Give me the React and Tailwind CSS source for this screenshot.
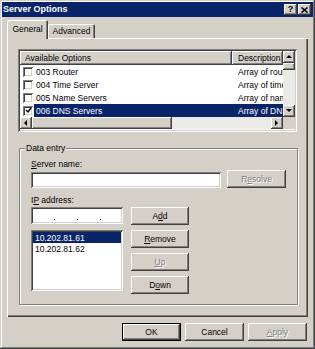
import React from "react";

const raised =
  "shadow-[inset_-1px_-1px_#404040,inset_1px_1px_#ffffff,inset_-2px_-2px_#808080,inset_2px_2px_#d4d0c8]";
const sunken =
  "shadow-[inset_1px_1px_#808080,inset_-1px_-1px_#ffffff,inset_2px_2px_#404040,inset_-2px_-2px_#d4d0c8]";
const disabledText = "text-[#808080] [text-shadow:1px_1px_#ffffff]";

function Btn({ children, disabled, className = "" }) {
  return (
    <div
      className={`h-[18px] w-[58px] flex items-center justify-center bg-[#d4d0c8] ${raised} ${
        disabled ? disabledText : "text-black"
      } ${className}`}
    >
      {children}
    </div>
  );
}

function Arrow({ dir }) {
  const pts = {
    up: "1,5 4,2 7,5",
    down: "1,2 4,5 7,2",
    left: "5,1 2,4 5,7",
    right: "2,1 5,4 2,7",
  }[dir];
  return (
    <div className={`w-[12px] h-[12px] bg-[#d4d0c8] ${raised} flex items-center justify-center shrink-0`}>
      <svg width="8" height="8" viewBox="0 0 8 8">
        <polygon points={pts} fill="#000" />
      </svg>
    </div>
  );
}

function Check({ checked }) {
  return (
    <div className={`w-[10px] h-[10px] bg-white ${sunken} shrink-0 flex items-center justify-center`}>
      {checked && (
        <svg width="7" height="7" viewBox="0 0 7 7">
          <polyline points="1,3 3,5 6,1" fill="none" stroke="#000" strokeWidth="1.4" />
        </svg>
      )}
    </div>
  );
}

const rows = [
  ["003 Router", "Array of rout"],
  ["004 Time Server", "Array of time"],
  ["005 Name Servers", "Array of nam"],
  ["006 DNS Servers", "Array of DNS"],
];

export default function App() {
  return (
    <div
      className={`w-[315px] h-[349px] bg-[#d4d0c8] font-['Liberation_Sans',Arial,sans-serif] text-[8.5px] leading-[10px] text-black p-[2px] pb-[3px] shadow-[inset_-1px_-1px_#404040,inset_1px_1px_#d4d0c8,inset_-2px_-2px_#808080,inset_2px_2px_#ffffff] flex flex-col`}
    >
      {/* Title bar */}
      <div className="h-[15px] bg-[#0a246a] flex items-center justify-between pl-[1px] pr-[2px] shrink-0">
        <span className="text-white font-bold text-[9px] leading-[11px]">Server Options</span>
        <div className="flex gap-[1px]">
          <div className={`w-[13px] h-[11px] bg-[#d4d0c8] ${raised} flex items-center justify-center font-bold text-[9px] leading-[9px]`}>
            ?
          </div>
          <div className={`w-[13px] h-[11px] bg-[#d4d0c8] ${raised} flex items-center justify-center`}>
            <svg width="7" height="6" viewBox="0 0 7 6">
              <path d="M0.5 0.5 L6.5 5.5 M6.5 0.5 L0.5 5.5" stroke="#000" strokeWidth="1.5" />
            </svg>
          </div>
        </div>
      </div>

      <div className="flex-1 flex flex-col px-[5px] pt-[3px]">
        {/* Tabs */}
        <div className="h-[18px] flex items-end relative z-10 shrink-0">
          <div className="h-[19px] -mb-[1px] w-[41px] bg-[#d4d0c8] rounded-t-[2px] shadow-[inset_1px_1px_#ffffff,inset_-1px_0_#404040,inset_-2px_0_#808080] flex items-start justify-center pt-[4px]">
            General
          </div>
          <div className="h-[14px] w-[47px] bg-[#d4d0c8] rounded-t-[2px] shadow-[inset_1px_1px_#ffffff,inset_-1px_0_#404040,inset_-2px_0_#808080] flex items-start justify-center pt-[2px]">
            Advanced
          </div>
        </div>

        {/* Panel */}
        <div className="h-[279px] shrink-0 bg-[#d4d0c8] shadow-[inset_1px_1px_#ffffff,inset_-1px_-1px_#404040,inset_-2px_-2px_#808080] pt-[11px] pl-[11px] pr-[11px] flex flex-col">
          {/* List view */}
          <div className={`h-[83px] p-[2px] bg-white ${sunken} flex flex-col shrink-0`}>
            <div className="h-[66px] flex">
              <div className="flex-1 flex flex-col overflow-hidden">
                <div className="h-[14px] flex shrink-0">
                  <div className={`w-[212px] h-full bg-[#d4d0c8] ${raised} pl-[5px] flex items-center`}>
                    Available Options
                  </div>
                  <div className={`flex-1 h-full bg-[#d4d0c8] ${raised} pl-[6px] flex items-center whitespace-nowrap overflow-hidden`}>
                    Description
                  </div>
                </div>
                {rows.map(([name, desc], i) => {
                  const sel = i === 3;
                  return (
                    <div key={name} className="h-[13px] flex items-center">
                      <div className="w-[14px] pl-[3px] flex items-center shrink-0">
                        <Check checked={sel} />
                      </div>
                      <div className={`flex-1 h-full flex items-center ${sel ? "bg-[#0a246a] text-white" : ""}`}>
                        <div className="w-[198px] pl-[2px] shrink-0 whitespace-nowrap">{name}</div>
                        <div className="flex-1 pl-[6px] whitespace-nowrap overflow-hidden">{desc}</div>
                      </div>
                    </div>
                  );
                })}
              </div>
              <div className="w-[12px] flex flex-col bg-[#eceae6] shrink-0">
                <Arrow dir="up" />
                <div className={`h-[7px] bg-[#d4d0c8] ${raised}`} />
                <div className="flex-1" />
                <Arrow dir="down" />
              </div>
            </div>
            <div className="h-[12px] flex">
              <div className="flex-1 flex bg-[#eceae6]">
                <Arrow dir="left" />
                <div className={`w-[140px] h-full bg-[#d4d0c8] ${raised}`} />
                <div className="flex-1" />
                <Arrow dir="right" />
              </div>
              <div className="w-[12px] bg-[#d4d0c8]" />
            </div>
          </div>

          {/* Group box */}
          <div className="mt-[16px] ml-[1px] mr-[-1px] h-[157px] relative border border-[#808080] shadow-[inset_1px_1px_#ffffff,1px_1px_#ffffff] pl-[11px] pt-[10px] flex flex-col">
            <div className="absolute -top-[6px] left-[5px] px-[1px] bg-[#d4d0c8]">Data entry</div>
            <div className="h-[10px]">
              <span className="underline">S</span>erver name:
            </div>
            <div className="mt-[1px] flex items-end gap-[6px]">
              <div className={`w-[190px] h-[16px] bg-white ${sunken}`} />
              <Btn disabled className="w-[59px]">
                R<span className="underline">e</span>solve
              </Btn>
            </div>
            <div className="mt-[7px] h-[10px]">
              I<span className="underline">P</span> address:
            </div>
            <div className="mt-[2px] flex gap-[8px]">
              <div className={`w-[92px] h-[17px] bg-white ${sunken} flex items-end gap-[22px] pl-[23px] pb-[4px]`}>
                <span className="w-[1px] h-[1px] bg-black" />
                <span className="w-[1px] h-[1px] bg-black" />
                <span className="w-[1px] h-[1px] bg-black" />
              </div>
              <Btn>
                A<span className="underline">d</span>d
              </Btn>
            </div>
            <div className="mt-[5px] flex gap-[8px]">
              <div className={`w-[92px] h-[61px] bg-white ${sunken} p-[2px] flex flex-col`}>
                <div className="h-[11px] bg-[#0a246a] text-white pl-[2px] flex items-center">10.202.81.61</div>
                <div className="h-[11px] pl-[2px] flex items-center">10.202.81.62</div>
              </div>
              <div className="flex flex-col gap-[5px]">
                <Btn>
                  <span className="underline">R</span>emove
                </Btn>
                <Btn disabled>
                  <span className="underline">U</span>p
                </Btn>
                <Btn>
                  D<span className="underline">o</span>wn
                </Btn>
              </div>
            </div>
          </div>
        </div>

        {/* Bottom buttons */}
        <div className="mt-[6px] flex justify-end gap-[4px] pr-[1px]">
          <div className="h-[18px] w-[59px] border border-black">
            <div className={`h-full w-full flex items-center justify-center ${raised}`}>OK</div>
          </div>
          <Btn className="w-[59px]">Cancel</Btn>
          <Btn disabled className="w-[59px]">
            <span className="underline">A</span>pply
          </Btn>
        </div>
      </div>
    </div>
  );
}
